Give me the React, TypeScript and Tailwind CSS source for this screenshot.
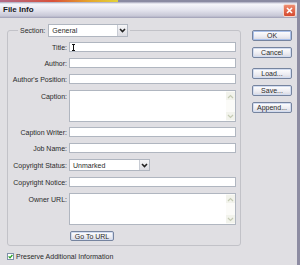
import type { ReactNode } from "react";

const Chevron = ({ up = false, color = "#222", w = 1.6 }: { up?: boolean; color?: string; w?: number }) => (
	<svg width="7" height="5" viewBox="0 0 7 5">
		<path
			d={up ? "M1 4 L3.5 1.5 L6 4" : "M1 1 L3.5 3.5 L6 1"}
			fill="none"
			stroke={color}
			strokeWidth={w}
		/>
	</svg>
);

function Dropdown({ value, width }: { value: string; width: string }) {
	return (
		<div className={`${width} h-full flex items-stretch bg-white border border-[#b0b6c0]`}>
			<span className="flex-1 flex items-center pl-[3px] leading-none">{value}</span>
			<span className="w-[10px] flex items-center justify-center bg-[linear-gradient(to_bottom,#f6f6f8,#dcdce2)] border-l border-[#c8ccd4]">
				<Chevron />
			</span>
		</div>
	);
}

function TextArea() {
	return (
		<div className="w-[167px] h-full flex bg-white border border-[#b0b6c0]">
			<div className="flex-1" />
			<div className="w-[9px] flex flex-col justify-between bg-[#fbfbf8] py-[1px]">
				<span className="h-[8px] flex items-center justify-center bg-[#f2f3ec]">
					<Chevron up color="#c5cbb4" w={1.2} />
				</span>
				<span className="h-[8px] flex items-center justify-center bg-[#f2f3ec]">
					<Chevron color="#c5cbb4" w={1.2} />
				</span>
			</div>
		</div>
	);
}

function Row({
	label,
	mt,
	h,
	top = false,
	children,
}: {
	label?: string;
	mt: string;
	h: string;
	top?: boolean;
	children: ReactNode;
}) {
	return (
		<div className={`flex ${mt} ${h}`}>
			<span
				className={`w-[59px] shrink-0 text-right leading-none whitespace-nowrap ${
					top ? "pt-[3px]" : "self-center"
				}`}
			>
				{label}
			</span>
			<div className="ml-[2px] flex">{children}</div>
		</div>
	);
}

const Field = ({ cursor = false }: { cursor?: boolean }) => (
	<div className="w-[167px] h-full bg-white border border-[#b0b6c0] flex items-center pl-[2px]">
		{cursor && (
			<svg width="3" height="7" viewBox="0 0 3 7">
				<path d="M0 0.5 H3 M1.5 0.5 V6.5 M0 6.5 H3" stroke="#111" strokeWidth="1" fill="none" />
			</svg>
		)}
	</div>
);

function SideButton({ label, mt, primary = false }: { label: string; mt: string; primary?: boolean }) {
	return (
		<button
			className={`${mt} w-[40px] h-[11px] flex items-center justify-center leading-none rounded-[2px] border border-[#76849f] bg-[linear-gradient(to_bottom,#ffffff,#ececf2_60%,#d8d8e0)] text-[#2a2a2a] ${
				primary ? "shadow-[inset_0_0_0_1px_#a9c0ea]" : "shadow-[inset_0_0_0_1px_#d2dcf0]"
			}`}
		>
			{label}
		</button>
	);
}

export default function App() {
	return (
		<div className="w-[300px] h-[265px] overflow-hidden flex flex-col bg-[#e0dfe3] font-['Liberation_Sans',Arial,sans-serif] text-[7px] text-[#2a2a2a]">
			<div className="h-[2px] flex">
				<div className="w-[118px] bg-[linear-gradient(to_right,#b26c8a,#d9503a_45%,#e6a42c_75%,#e2d23a)]" />
				<div className="flex-1 bg-[#8a8aa2]" />
			</div>

			<div className="flex-1 flex flex-col border-r-[3px] border-r-[#8d8ca2]">
				<div className="h-[16px] flex items-center justify-between bg-[linear-gradient(to_bottom,#a4a4ba_0px,#f6f6fb_2px,#e4e4ee_8px,#c7c7d6_14px,#9e9eb4_16px)]">
					<span className="pl-[3px] text-[8px] font-bold text-[#1a1a22] leading-none">File Info</span>
					<span className="mr-[1px] w-[13px] h-[13px] rounded-[2px] border border-[#f4d6cc] bg-[linear-gradient(to_bottom,#ee8c70,#d5492f)] flex items-center justify-center">
						<svg width="7" height="7" viewBox="0 0 7 7">
							<path d="M1 1 L6 6 M6 1 L1 6" stroke="#fff" strokeWidth="1.6" />
						</svg>
					</span>
				</div>

				<div className="flex-1 flex">
					<div className="pl-[7px] flex flex-col">
						<fieldset className="mt-[6px] w-[234px] h-[222px] border border-[#c2c2c8] rounded-[3px]">
							<legend className="ml-[10px] px-[2px] h-[13px] flex items-center">
								<span className="leading-none">Section:</span>
								<span className="ml-[3px] h-[13px] flex">
									<Dropdown value="General" width="w-[80px]" />
								</span>
							</legend>

							<Row label="Title:" mt="mt-[5px]" h="h-[10px]">
								<Field cursor />
							</Row>
							<Row label="Author:" mt="mt-[6px]" h="h-[10px]">
								<Field />
							</Row>
							<Row label="Author's Position:" mt="mt-[6px]" h="h-[10px]">
								<Field />
							</Row>
							<Row label="Caption:" mt="mt-[6px]" h="h-[32px]" top>
								<TextArea />
							</Row>
							<Row label="Caption Writer:" mt="mt-[5px]" h="h-[10px]">
								<Field />
							</Row>
							<Row label="Job Name:" mt="mt-[6px]" h="h-[10px]">
								<Field />
							</Row>
							<Row label="Copyright Status:" mt="mt-[6px]" h="h-[12px]">
								<Dropdown value="Unmarked" width="w-[81px]" />
							</Row>
							<Row label="Copyright Notice:" mt="mt-[6px]" h="h-[10px]">
								<Field />
							</Row>
							<Row label="Owner URL:" mt="mt-[6px]" h="h-[32px]" top>
								<TextArea />
							</Row>
							<Row mt="mt-[6px]" h="h-[10px]">
								<button className="ml-[1px] w-[44px] h-[10px] flex items-center justify-center leading-none rounded-[2px] border border-[#76849f] bg-[linear-gradient(to_bottom,#ffffff,#ececf2_60%,#d8d8e0)] shadow-[inset_0_0_0_1px_#d2dcf0]">
									Go To URL
								</button>
							</Row>
						</fieldset>

						<label className="mt-[7px] h-[7px] flex items-center gap-[2px]">
							<span className="w-[7px] h-[7px] border border-[#7f90a8] bg-white flex items-center justify-center">
								<svg width="5" height="5" viewBox="0 0 5 5">
									<path d="M0.6 2.4 L2 3.8 L4.4 1" stroke="#22a022" strokeWidth="1.3" fill="none" />
								</svg>
							</span>
							<span className="leading-none">Preserve Additional Information</span>
						</label>
					</div>

					<div className="ml-[11px] flex flex-col">
						<SideButton label="OK" mt="mt-[12px]" primary />
						<SideButton label="Cancel" mt="mt-[6px]" />
						<SideButton label="Load..." mt="mt-[10px]" />
						<SideButton label="Save..." mt="mt-[6px]" />
						<SideButton label="Append..." mt="mt-[6px]" />
					</div>
				</div>
			</div>
		</div>
	);
}
